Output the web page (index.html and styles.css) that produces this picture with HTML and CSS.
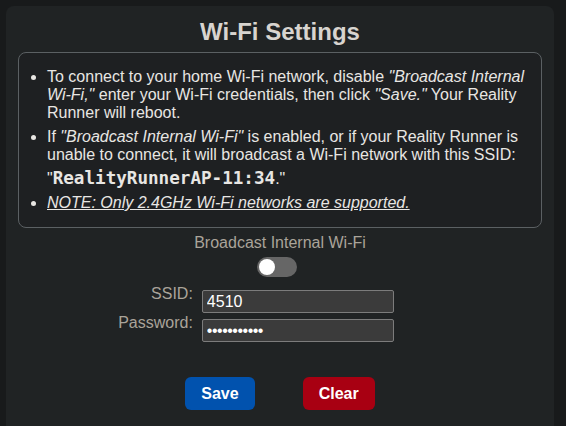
FILE: index.html
```html
<!DOCTYPE html>
<html lang="en">
<head>
<meta charset="utf-8">
<title>Wi-Fi Settings</title>
<link rel="stylesheet" href="styles.css">
</head>
<body>
<main class="card">
  <h1 class="title">Wi-Fi Settings</h1>
  <div class="info">
    <ul class="info-list">
      <li>To connect to your home Wi-Fi network, disable <em>"Broadcast Internal Wi-Fi,"</em> enter your Wi-Fi credentials, then click <em>"Save."</em> Your Reality Runner will reboot.</li>
      <li>If <em>"Broadcast Internal Wi-Fi"</em> is enabled, or if your Reality Runner is unable to connect, it will broadcast a Wi-Fi network with this SSID: <span class="ssid-wrap">"<code class="ssid">RealityRunnerAP-11:34</code>."</span></li>
      <li><em class="note">NOTE: Only 2.4GHz Wi-Fi networks are supported.</em></li>
    </ul>
  </div>
  <div class="broadcast-label">Broadcast Internal Wi-Fi</div>
  <div class="toggle-row"><span class="toggle" role="switch" aria-checked="false"></span></div>
  <form class="fields">
    <label class="field-label" for="ssid">SSID:</label>
    <input class="field-input" id="ssid" type="text" value="4510">
    <label class="field-label" for="pw">Password:</label>
    <input class="field-input field-password" id="pw" type="password" value="abcdefghijk">
  </form>
  <div class="actions">
    <button class="btn btn-save" type="button">Save</button>
    <button class="btn btn-clear" type="button">Clear</button>
  </div>
</main>
</body>
</html>
```
FILE: styles.css
```css
html, body {
  height: 100%;
}
body {
  margin: 6px 12px 0 6px;
  background: #181a1b;
  font-family: "Liberation Sans", Arial, sans-serif;
  font-size: 16px;
  color: #e8e6e3;
  overflow: hidden;
}
.card {
  box-sizing: border-box;
  min-height: calc(100% + 20px);
  background: #202324;
  border-radius: 8px;
  padding: 12px 12px 0;
}
.title {
  margin: 0 0 6px;
  font-size: 24px;
  line-height: 28px;
  font-weight: bold;
  text-align: center;
  color: #d8d4cf;
}
.info {
  border: 1px solid #5b6063;
  border-radius: 8px;
  padding: 0 8px;
  background: #1e2022;
}
.info-list {
  margin: 15px 0;
  padding-left: 20px;
  line-height: 18px;
}
.info-list li + li {
  margin-top: 6px;
}
.ssid-wrap {
  display: inline-block;
  padding-top: 5px;
  white-space: nowrap;
}
.ssid {
  font-family: "DejaVu Sans Mono", monospace;
  font-weight: bold;
  font-size: 17.6px;
  line-height: 18px;
}
.note {
  text-decoration: underline;
}
.broadcast-label {
  margin-top: 6px;
  text-align: center;
  line-height: 18px;
  color: #aaa49a;
}
.toggle-row {
  display: flex;
  justify-content: center;
  margin-top: 5px;
}
.toggle {
  position: relative;
  display: block;
  width: 40px;
  height: 20px;
  border-radius: 10px;
  background: #666666;
  margin-right: 6px;
}
.toggle::after {
  content: "";
  position: absolute;
  left: 2px;
  top: 2px;
  width: 16px;
  height: 16px;
  border-radius: 50%;
  background: #ffffff;
}
.fields {
  display: grid;
  grid-template-columns: auto 192px;
  justify-content: center;
  column-gap: 9px;
  row-gap: 1px;
  padding-right: 48px;
  margin-top: 8px;
}
.field-label {
  text-align: right;
  line-height: 18px;
  color: #aaa49a;
}
.field-input {
  box-sizing: border-box;
  margin: 5px 0 0;
  width: 192px;
  height: 23px;
  padding: 0 4px;
  border: 1px solid #7c7c7c;
  border-radius: 2px;
  background: #3b3b3b;
  color: #ffffff;
  font-family: "Liberation Sans", Arial, sans-serif;
  font-size: 16px;
  outline: none;
}
.field-password {
  letter-spacing: -0.5px;
}
.actions {
  display: flex;
  justify-content: center;
  gap: 48px;
  margin-top: 35px;
}
.btn {
  height: 33px;
  padding: 0 16px;
  border: none;
  border-radius: 6px;
  color: #ffffff;
  font-family: "Liberation Sans", Arial, sans-serif;
  font-size: 16px;
  font-weight: bold;
}
.btn-save {
  background: #0152ae;
}
.btn-clear {
  background: #a80012;
}
```
